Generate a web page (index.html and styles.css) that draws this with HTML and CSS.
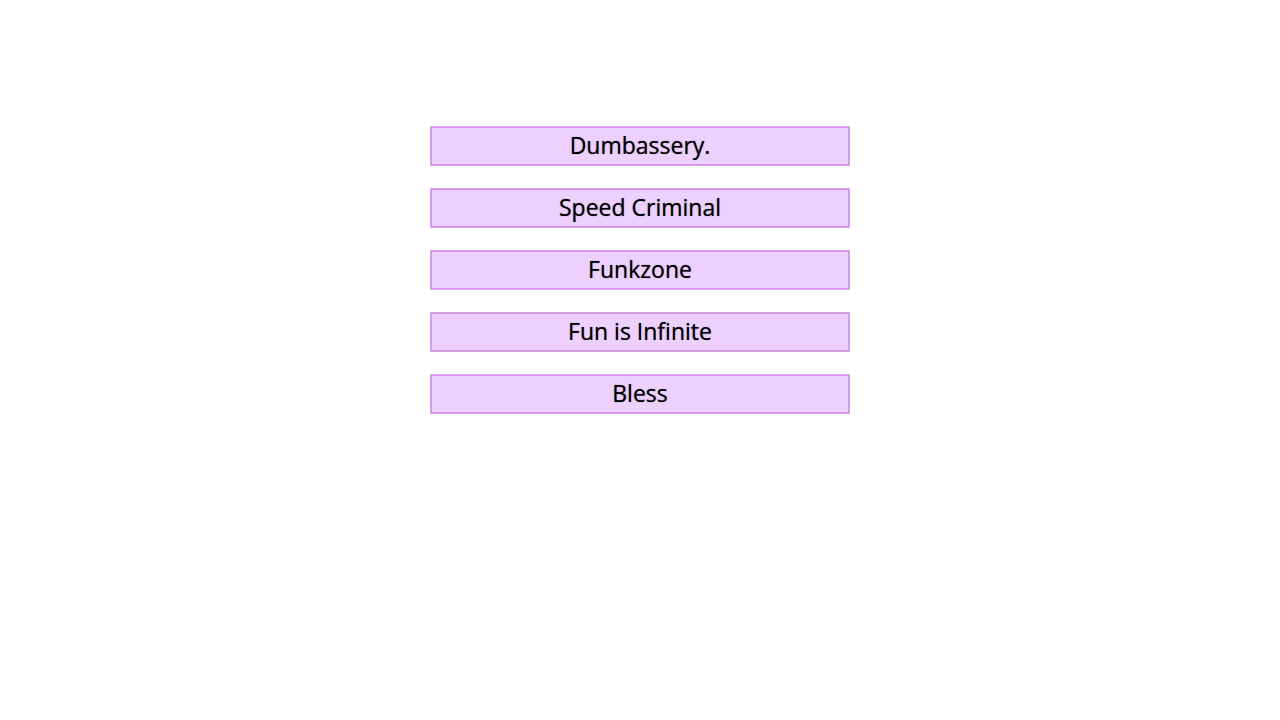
FILE: index.html
```html
<!DOCTYPE html>
<html>
<head>
<meta charset="utf-8">
<link rel="stylesheet" href="styles.css">
</head>
<body>
<div class="menu">
  <button class="item">Dumbassery.</button>
  <button class="item">Speed Criminal</button>
  <button class="item">Funkzone</button>
  <button class="item">Fun is Infinite</button>
  <button class="item">Bless</button>
</div>
</body>
</html>
```
FILE: styles.css
```css
html, body {
  margin: 0;
  padding: 0;
  background: #ffffff;
}
.menu {
  display: flex;
  flex-direction: column;
  align-items: center;
  gap: 22px;
  padding-top: 126px;
}
.item {
  width: 420px;
  height: 40px;
  box-sizing: border-box;
  margin: 0;
  padding: 0 0 2px 0;
  background: #edd0fd;
  border: 1px solid #d3acdf;
  box-shadow: inset 0 0 0 1px #d98cf4;
  font-family: "Open Sans", "Noto Sans", sans-serif;
  font-size: 23px;
  color: #000;
  text-shadow: 0 0 1px rgba(0,0,0,0.6);
  line-height: 28px;
  text-align: center;
}
```
